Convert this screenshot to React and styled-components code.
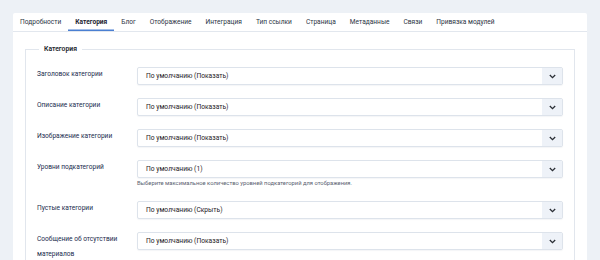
import styled, { createGlobalStyle } from 'styled-components';

const tabs = [
  'Подробности',
  'Категория',
  'Блог',
  'Отображение',
  'Интеграция',
  'Тип ссылки',
  'Страница',
  'Метаданные',
  'Связи',
  'Привязка модулей',
];

const fields = [
  { label: 'Заголовок категории', value: 'По умолчанию (Показать)' },
  { label: 'Описание категории', value: 'По умолчанию (Показать)' },
  { label: 'Изображение категории', value: 'По умолчанию (Показать)' },
  {
    label: 'Уровни подкатегорий',
    value: 'По умолчанию (1)',
    hint: 'Выберите максимальное количество уровней подкатегорий для отображения.',
  },
  { label: 'Пустые категории', value: 'По умолчанию (Скрыть)' },
  { label: 'Сообщение об отсутствии материалов', value: 'По умолчанию (Показать)' },
];

function Chevron() {
  return (
    <svg width="7" height="5" viewBox="0 0 7 5">
      <polyline points="0.8,1 3.5,3.7 6.2,1" fill="none" stroke="#2b2f36" strokeWidth="1.3" />
    </svg>
  );
}

function App() {
  return (
    <>
      <GlobalStyle />
      <Card>
        <TabList>
          {tabs.map((t) => (
            <Tab key={t} $active={t === 'Категория'}>
              {t}
            </Tab>
          ))}
        </TabList>
        <Content>
          <Fieldset>
            <Legend>Категория</Legend>
            {fields.map((f) => (
              <Row key={f.label}>
                <Label>{f.label}</Label>
                <Control>
                  <Select>
                    <SelectText>{f.value}</SelectText>
                    <Caret>
                      <Chevron />
                    </Caret>
                  </Select>
                  {f.hint ? <Hint>{f.hint}</Hint> : null}
                </Control>
              </Row>
            ))}
          </Fieldset>
        </Content>
      </Card>
    </>
  );
}

export default App;

const GlobalStyle = createGlobalStyle`
  html, body {
    margin: 0;
    background: #edf1f6;
    font-family: Roboto, "Noto Sans", sans-serif;
    color: #22262a;
  }
  * { box-sizing: border-box; }
`;

const Card = styled.div`
  background: #ffffff;
  margin: 13px 13px 0;
  min-height: 247px;
  border-radius: 2px 2px 0 0;
`;

const TabList = styled.div`
  display: flex;
  height: 19px;
  border-bottom: 1px solid #e2e7ee;
`;

const Tab = styled.div`
  padding: 0 7px;
  height: 18px;
  line-height: 18px;
  font-size: 6.6px;
  color: #2b3443;
  font-weight: ${({ $active }) => ($active ? 700 : 400)};
  box-shadow: ${({ $active }) => ($active ? 'inset 0 -1.5px 0 #4a7fd2' : 'none')};
  ${({ $active }) => ($active ? 'color: #1b2230;' : '')}
  white-space: nowrap;
`;

const Content = styled.div`
  padding: 12px 12px 0;
`;

const Fieldset = styled.fieldset`
  margin: 0;
  border: 1px solid #e1e6ed;
  border-bottom: none;
  padding: 13px 11px 0;
`;

const Legend = styled.legend`
  margin-left: 2px;
  padding: 0 5px;
  font-size: 6.8px;
  line-height: 10px;
  font-weight: 600;
  color: #22262a;
`;

const Row = styled.div`
  display: grid;
  grid-template-columns: 100px 1fr;
  align-items: start;
  margin-bottom: 13px;
`;

const Label = styled.div`
  padding-right: 12px;
  font-size: 6.6px;
  line-height: 15px;
  color: #1a2b4d;
`;

const Control = styled.div`
  display: flex;
  flex-direction: column;
`;

const Select = styled.div`
  display: flex;
  align-items: stretch;
  height: 18px;
  border: 1px solid #dde3eb;
  border-radius: 2px;
  background: #fff;
  box-shadow: 0 1px 1px rgba(30, 50, 90, 0.05);
  overflow: hidden;
`;

const SelectText = styled.div`
  flex: 1;
  padding-left: 8px;
  font-size: 6.7px;
  line-height: 16px;
  color: #1e2126;
`;

const Caret = styled.div`
  width: 20px;
  display: flex;
  align-items: center;
  justify-content: center;
  background: #eef2f8;
`;

const Hint = styled.div`
  margin-top: 1px;
  font-size: 5.8px;
  line-height: 9px;
  color: #5a6270;
`;
